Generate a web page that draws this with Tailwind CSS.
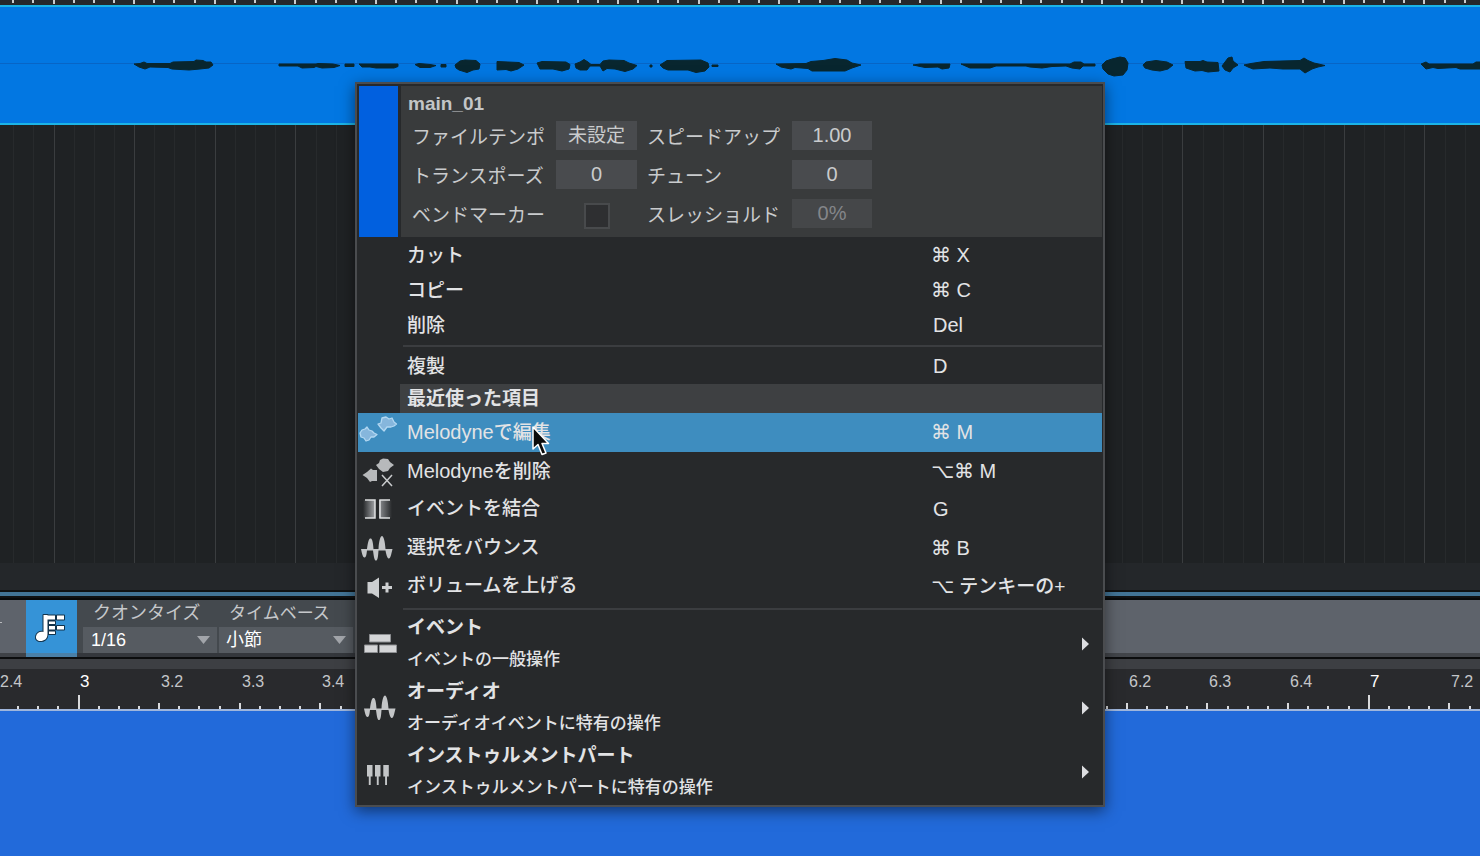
<!DOCTYPE html>
<html lang="ja">
<head>
<meta charset="utf-8">
<title>main_01</title>
<script src="https://cdn.jsdelivr.net/npm/@tailwindcss/browser@4"></script>
</head>
<body class="relative flex min-h-screen flex-col overflow-hidden bg-[#226ada] font-['Liberation_Sans','Noto_Sans_CJK_JP','DejaVu_Sans',sans-serif] text-[#e2e3e5]">

<!-- arrangement -->
<div class="h-[5px] overflow-hidden bg-[#26282b]"><svg id="topTicks" class="h-full w-full" aria-hidden="true"></svg></div>
<div class="h-[120px] overflow-hidden border-y-2 border-[#1cb4e6] bg-[#0277e2]">
  <svg class="h-[116px] w-full" aria-hidden="true">
    <g transform="translate(0 -7)">
      <rect y="63" width="100%" height="1" fill="#0765c6"/>
      <path fill="#08262f" stroke="#08262f" stroke-width="1" d="
      M134 64L140 63.500L144 62L147 63.500L170 63.500L173 62L194 61.500L196 60L203 60.500L206 62L211 62L213 65L209 68L200 69L189 70L172 69L168 67.500L150 67L145 69L139 67Z
      M279 64H316L318 63.500L333 64L340 65.500L334 67.500L322 68L316 66.500L314 67.500L302 68L298 66L279 66Z
      M345 64H354V66.500H345Z M359 64H398V66.500L394 68H376L370 67H362Z
      M415 64.500L419 63.500L430 64.500L436 65.500L430 67.500H420Z M441 64.500H446V67H441Z
      M455 65L460 61L465 60L476 60.500L480 64L479 69L473 70L467 72.500L459 70L456 68Z
      M497 61.500L508 62L519 62.500L524 65L518 69L511 71L506 69.500L497 70Z
      M537 63L542 61.500L566 62L570 64.500L569 69L562 71L553 69L540 69Z
      M575 64L580 62L584 59.500L588 62L591 64.500H600L603 61L609 60L624 60.500L629 63L637 65.500L633 69L625 71.500L615 69L607 68.500L603 71L600 66H590L587 70L580 70L576 68Z
      M650 65H652V67H650Z M660 65L667 60.500L701 60L708 63L709 67L705 71L696 72.500L688 70L668 70L663 68Z M712 65H718V66.500H712Z
      M776 64L806 63.500L811 61.500L823 60.500L835 58.500L847 60L852 63L861 65L852 68L845 71H812L808 68.500L795 67.500L791 69L781 67Z
      M913 65L920 64L950 64L949 68L942 69L938 67L925 67.500Z M961 64H996L1070 64L1074 62L1081 62L1084 64H1095V66H1083L1080 69L1072 68L1066 66L1052 66.500L1042 68L1030 67L1026 66L996 66L990 68L970 68Z
      M1102 65L1106 61L1112 59L1120 57L1125 58L1128 63L1127 70L1123 75L1114 76L1108 74L1103 69Z
      M1143 65L1146 62L1156 60.500L1167 62L1173 65L1168 69L1160 71L1152 70L1145 68Z
      M1185 61.500L1200 61.500L1203 60.500L1207 62L1218 62.500L1219 71L1208 72L1202 70.500L1195 71L1186 68Z
      M1222 66L1225 62L1228 58L1232 57L1233 61L1238 65L1233 68L1230 72L1225 70Z
      M1244 65L1251 63.500L1264 61.500L1300 60.500L1304 58L1308 60.500L1314 63L1325 65.500L1318 67L1312 69L1305 73L1300 69L1283 69L1270 68L1253 69L1248 67Z
      M1421 64L1426 62L1429 64H1473L1476 62L1480 62V69L1460 69L1456 67.500L1438 68.500L1433 67.500L1426 69Z"/>
    </g>
  </svg>
</div>
<div class="h-[438px] overflow-hidden bg-[#1f2224]"><svg id="laneGrid" class="h-full w-full" aria-hidden="true"></svg></div>
<div class="h-[27px] bg-[#24272a]"></div>
<div class="h-2 border-y-2 border-[#101213] bg-[#427496]"></div>
<div class="h-[2px] bg-[#08090a]"></div>

<!-- editor toolbar -->
<div class="flex h-[57px] bg-[#5e636b]">
  <div class="flex w-[26px] shrink-0 flex-col border-b-4 border-[#3f4247]"><div class="mt-[22px] h-px w-[2px] bg-[#b8babd]"></div></div>
  <button aria-label="クオンタイズ" class="flex w-[51px] shrink-0 items-center justify-center border-b-4 border-[#4a80a8] bg-[#3593d7]">
    <svg class="h-[30px] w-[34px]" viewBox="0 0 34 30" aria-hidden="true">
      <path fill="#fff" stroke="#12324a" stroke-width="2" stroke-linejoin="round" paint-order="stroke" d="M8.500 3H12.500V22C12.500 27 9 29 5.500 29C2.500 29 .5 27 1 24.500C1.500 21 5 19 8.500 20ZM12.500 3.500H20V7.500H12.500ZM22 3.500H29V7.500H22ZM14 9.500H20V12H14ZM14 14H20V17.500H14ZM22 14H29V17.500H22ZM14 19.500H20V22H14Z"/>
    </svg>
  </button>
  <div class="flex w-[278px] shrink-0 border-b-4 border-[#34373c] bg-[#44494e] pl-[6px]">
    <div class="flex w-[136px] flex-col">
      <label for="quantize" class="h-[27px] pl-[10px] text-[18px] leading-[27px] text-[#c6c8cb]">クオンタイズ</label>
      <div class="relative h-[26px] border-r-2 border-[#44494e] bg-[#565b61]">
        <select id="quantize" class="block h-full w-full appearance-none bg-transparent pl-[8px] text-[18px] leading-[26px] text-white"><option>1/16</option></select>
        <svg class="pointer-events-none absolute top-[9px] right-[7px] h-2 w-[13px]" viewBox="0 0 13 8" aria-hidden="true"><path fill="#a2a5aa" d="M0 0H13L6.500 8Z"/></svg>
      </div>
    </div>
    <div class="flex w-[134px] flex-col">
      <label for="timebase" class="h-[27px] pl-[10px] text-[17px] leading-[27px] text-[#c6c8cb]">タイムベース</label>
      <div class="relative h-[26px] bg-[#565b61]">
        <select id="timebase" class="block h-full w-full appearance-none bg-transparent pl-[7px] text-[18px] leading-[26px] text-white"><option>小節</option></select>
        <svg class="pointer-events-none absolute top-[9px] right-[7px] h-2 w-[13px]" viewBox="0 0 13 8" aria-hidden="true"><path fill="#a2a5aa" d="M0 0H13L6.500 8Z"/></svg>
      </div>
    </div>
  </div>
  <div class="flex-1 border-b-4 border-[#42454a]"></div>
</div>
<div class="h-[2px] bg-[#0c0d0e]"></div>
<div class="h-[10px] bg-[#3d3f43]"></div>
<div id="ruler" class="relative h-[42px] overflow-hidden border-b-2 border-[#9fb6dc] bg-[#292a2d] text-[16px] leading-[26px] text-[#c4c6c9]">
  <svg id="rulerTicks" class="h-full w-full" aria-hidden="true"></svg>
</div>

<!-- context menu -->
<div role="menu" aria-label="main_01" class="absolute top-[82px] left-[355px] w-[750px] border-2 border-[#4a4c4f] bg-[#27292b] px-px pt-[2px] pb-px font-medium shadow-[0_4px_14px_rgba(0,0,0,0.5)]">
  <div class="flex gap-[3px] pl-px">
    <div class="w-[39px] bg-[#0160df]"></div>
    <div class="h-[151px] flex-1 bg-[#393b3c]">
      <div class="h-[35px] pl-[7px] text-[19px] leading-[35px] font-bold text-[#c3c5c7]">main_01</div>
      <div class="grid grid-cols-[144px_81px_155px_80px] gap-y-[10px] pl-[11px] text-[19px] leading-[29px] font-normal text-[#c9cbcd]">
        <label for="tempo" class="h-[29px] pt-[2px]">ファイルテンポ</label>
        <input id="tempo" value="未設定" class="h-[29px] w-full min-w-0 bg-[#494b4e] text-center">
        <label for="speed" class="h-[29px] pt-[2px] pl-[10px]">スピードアップ</label>
        <input id="speed" value="1.00" class="h-[29px] w-full min-w-0 bg-[#494b4e] text-center text-[20px]">
        <label for="transpose" class="h-[29px] pt-[2px]">トランスポーズ</label>
        <input id="transpose" value="0" class="h-[29px] w-full min-w-0 bg-[#494b4e] text-center text-[20px]">
        <label for="tune" class="h-[29px] pt-[2px] pl-[10px]">チューン</label>
        <input id="tune" value="0" class="h-[29px] w-full min-w-0 bg-[#494b4e] text-center text-[20px]">
        <label for="bend" class="h-[29px] pt-[2px]">ベンドマーカー</label>
        <div class="flex justify-center pt-[4px]"><input id="bend" type="checkbox" class="h-[26px] w-[26px] appearance-none border-2 border-[#484a4c] bg-[#2e2f31]"></div>
        <label for="threshold" class="h-[29px] pt-[2px] pl-[10px]">スレッショルド</label>
        <input id="threshold" value="0%" disabled class="h-[29px] w-full min-w-0 bg-[#454749] text-center text-[20px] text-[#84868a]">
      </div>
    </div>
  </div>

  <button role="menuitem" class="grid h-[35px] w-full grid-cols-[49px_1fr_171px] items-center text-left text-[19px]"><span></span><span class="pt-[3px]">カット</span><span class="text-[20px]"><span class="font-['DejaVu_Sans']">⌘</span> X</span></button>
  <button role="menuitem" class="grid h-[35px] w-full grid-cols-[49px_1fr_171px] items-center text-left text-[19px]"><span></span><span class="pt-[3px]">コピー</span><span class="text-[20px]"><span class="font-['DejaVu_Sans']">⌘</span> C</span></button>
  <button role="menuitem" class="grid h-[35px] w-full grid-cols-[49px_1fr_171px] items-center text-left text-[19px]"><span></span><span class="pt-[3px]">削除</span><span class="pl-[2px] text-[20px]">Del</span></button>
  <div role="separator" class="mt-[3px] ml-[45px] h-[2px] bg-[#3b3d40]"></div>
  <button role="menuitem" class="grid h-[37px] w-full grid-cols-[49px_1fr_171px] items-center text-left text-[19px]"><span></span><span class="pt-[3px]">複製</span><span class="pl-[2px] text-[20px]">D</span></button>
  <div class="ml-[42px] h-[29px] bg-[#3e4042] pl-[7px] text-[19px] leading-[29px] font-bold">最近使った項目</div>

  <div class="grid h-[193px] auto-rows-fr">
    <button role="menuitem" class="grid w-full grid-cols-[49px_1fr_171px] items-center bg-[#3e8dbf] text-left text-[19px]">
      <svg class="h-[38px] w-[40px]" viewBox="0 0 40 38" aria-hidden="true"><g fill="#86b6dc" stroke="#b3d8f2" stroke-width="1.300" stroke-linejoin="round"><path d="M2 20L4 17L7 16L9 14L11 17L14 18L16 20L19 21.500L16 24L13 24L11 27L8 28L6 25L3 24Z"/><path d="M20 11L23 10L24 5L28 4L31 6L34 5L36 9L38.500 11L36 13L33 14L29 14L26 18L23 15Z"/></g></svg>
      <span><span class="text-[20px]">Melodyne</span>で編集</span><span class="text-[20px]"><span class="font-['DejaVu_Sans']">⌘</span> M</span>
    </button>
    <button role="menuitem" class="grid w-full grid-cols-[49px_1fr_171px] items-center text-left text-[19px]">
      <svg class="h-[38px] w-[40px]" viewBox="0 0 40 38" aria-hidden="true"><g fill="#b7b9bb"><path d="M18 13L21 11L22 8L25 6.500L30 7L32 10L36 13L32 16L30 19L25 20L21 17Z"/><path d="M4.500 23L9 20L13 16.500L15 18H19V29H14L12 30L9 26Z"/></g><path d="M24 23L34 34M34 23L24 34" stroke="#c9cbcd" stroke-width="1.500"/></svg>
      <span><span class="text-[20px]">Melodyne</span>を削除</span><span class="text-[20px]"><span class="font-['DejaVu_Sans']">⌥⌘</span> M</span>
    </button>
    <button role="menuitem" class="grid w-full grid-cols-[49px_1fr_171px] items-center text-left text-[19px]">
      <svg class="h-[38px] w-[40px]" viewBox="0 0 40 38" aria-hidden="true"><defs><linearGradient id="fadeIn"><stop offset="0" stop-color="#27292b"/><stop offset="1" stop-color="#a3a5a8"/></linearGradient><linearGradient id="fadeOut"><stop offset="0" stop-color="#8c8e91"/><stop offset="1" stop-color="#27292b"/></linearGradient></defs><path fill="url(#fadeIn)" d="M5 10H17V28H5Z"/><path fill="url(#fadeOut)" d="M21 10H34V28H21Z"/><path d="M7 10H17V28H7M32 10H22V28H32" fill="none" stroke="#dedfe1" stroke-width="1.500"/></svg>
      <span>イベントを結合</span><span class="pl-[2px] text-[20px]">G</span>
    </button>
    <button role="menuitem" class="grid w-full grid-cols-[49px_1fr_171px] items-center text-left text-[19px]">
      <svg class="h-[38px] w-[40px]" viewBox="0 0 40 38" aria-hidden="true"><path fill="#c3c5c7" d="M3 20H9C10 12 11 9.500 12.500 9.500S15 12 15.500 20H20.500C21 11 22.500 7 24 7S27 12 27.500 20H34.500C33 26 32.500 29.500 31 29.500S28.500 27 27.500 21.500H20.500C20 29 19.500 31.500 18 31.500S16 29 15 21.500H9C8.500 26 8 28.500 6.500 28.500S4 25 3 20Z"/></svg>
      <span>選択をバウンス</span><span class="text-[20px]"><span class="font-['DejaVu_Sans']">⌘</span> B</span>
    </button>
    <button role="menuitem" class="grid w-full grid-cols-[49px_1fr_171px] items-center text-left text-[19px]">
      <svg class="h-[38px] w-[40px]" viewBox="0 0 40 38" aria-hidden="true"><path fill="#cdcfd1" d="M9.500 14H14L21 9.500V30L14 25.500H9.500ZM24 18H27.500V14.500H30.500V18H34V21H30.500V24.500H27.500V21H24Z"/></svg>
      <span>ボリュームを上げる</span><span><span class="font-['DejaVu_Sans'] text-[20px]">⌥</span> テンキーの+</span>
    </button>
  </div>
  <div role="separator" class="mt-[2px] mb-[2px] ml-[45px] h-[2px] bg-[#3b3d40]"></div>

  <button role="menuitem" aria-haspopup="menu" class="grid h-[64px] w-full grid-cols-[49px_1fr_20px] items-center text-left">
    <svg class="h-[64px] w-[40px]" viewBox="0 0 40 64" aria-hidden="true"><path fill="#d4d5d7" stroke="#8d8f92" stroke-width="1" d="M11.500 22.500H32.500V30H11.500ZM6.500 33H19.500V40.500H6.500ZM21.500 33H38.500V40.500H21.500Z"/></svg>
    <span class="flex flex-col"><span class="text-[19px] leading-[32px] font-bold">イベント</span><span class="text-[17px] leading-[32px]">イベントの一般操作</span></span>
    <svg class="h-[14px] w-[7px]" viewBox="0 0 7 14" aria-hidden="true"><path fill="#dcdde0" d="M0 0.500L7 7L0 13.500Z"/></svg>
  </button>
  <button role="menuitem" aria-haspopup="menu" class="grid h-[64px] w-full grid-cols-[49px_1fr_20px] items-center text-left">
    <svg class="h-[64px] w-[40px]" viewBox="0 0 40 64" aria-hidden="true"><path transform="translate(3 12.500)" fill="#c3c5c7" d="M3 20H9C10 12 11 9.500 12.500 9.500S15 12 15.500 20H20.500C21 11 22.500 7 24 7S27 12 27.500 20H34.500C33 26 32.500 29.500 31 29.500S28.500 27 27.500 21.500H20.500C20 29 19.500 31.500 18 31.500S16 29 15 21.500H9C8.500 26 8 28.500 6.500 28.500S4 25 3 20Z"/></svg>
    <span class="flex flex-col"><span class="text-[19px] leading-[32px] font-bold">オーディオ</span><span class="text-[17px] leading-[32px]">オーディオイベントに特有の操作</span></span>
    <svg class="h-[14px] w-[7px]" viewBox="0 0 7 14" aria-hidden="true"><path fill="#dcdde0" d="M0 0.500L7 7L0 13.500Z"/></svg>
  </button>
  <button role="menuitem" aria-haspopup="menu" class="grid h-[64px] w-full grid-cols-[49px_1fr_20px] items-center text-left">
    <svg class="h-[64px] w-[40px]" viewBox="0 0 40 64" aria-hidden="true"><path fill="#c3c5c7" d="M9 25H14.500V36.500H12.700V45H10.800V36.500H9ZM17 25H22.500V36.500H20.700V45H18.800V36.500H17ZM25.300 25H30.800V36.500H29V45H27.100V36.500H25.300Z"/></svg>
    <span class="flex flex-col"><span class="text-[19px] leading-[32px] font-bold">インストゥルメントパート</span><span class="text-[17px] leading-[32px]">インストゥルメントパートに特有の操作</span></span>
    <svg class="h-[14px] w-[7px]" viewBox="0 0 7 14" aria-hidden="true"><path fill="#dcdde0" d="M0 0.500L7 7L0 13.500Z"/></svg>
  </button>
</div>

<!-- mouse pointer -->
<svg class="pointer-events-none absolute top-[425px] left-[531px] h-[32px] w-[20px]" viewBox="0 0 20 32" aria-hidden="true"><path fill="#0b0b0b" stroke="#fff" stroke-width="1.500" stroke-linejoin="round" d="M2 2V24L7 19.500L11 29.500L15 28L11 18.500H17.500Z"/></svg>

<script>
  const BEAT = 80.64;
  function rect(svg, x, y, w, h, fill) {
    const r = document.createElementNS('http://www.w3.org/2000/svg', 'rect');
    Object.entries({ x: Math.round(x), y, width: w, height: h, fill }).forEach(([k, v]) => r.setAttribute(k, v));
    svg.appendChild(r);
  }
  const topTicks = document.getElementById('topTicks');
  const grid = document.getElementById('laneGrid');
  const ruler = document.getElementById('ruler');
  const ticks = document.getElementById('rulerTicks');
  for (let i = -4; i < 140; i++) {
    const beat = i % 4 === 0;
    const gx = 53.500 + i * BEAT / 4;
    rect(topTicks, gx - 1, 0, 2, beat ? 4 : 3, '#c9cbcd');
    rect(grid, gx, 0, 1, 438, beat ? '#3a3d3f' : '#272a2c');
    const rx = 77.500 + i * BEAT / 4;
    rect(ticks, rx, i % 16 === 0 ? 26 : beat ? 34 : 37, 2, 16, '#d9dadc');
  }
  // beats whose labels are not behind the open menu, counted from bar 3
  for (const n of [-1, 0, 1, 2, 3, 13, 14, 15, 16, 17]) {
    const measure = 3 + Math.floor(n / 4), sub = (n + 4) % 4;
    const label = document.createElement('span');
    label.textContent = sub ? measure + '.' + (sub + 1) : measure;
    label.className = sub ? 'absolute top-0' : 'absolute top-0 text-[17px] text-white';
    label.style.left = Math.round(77.500 + n * BEAT + (sub ? 3 : 2)) + 'px';
    ruler.appendChild(label);
  }
</script>
</body>
</html>
